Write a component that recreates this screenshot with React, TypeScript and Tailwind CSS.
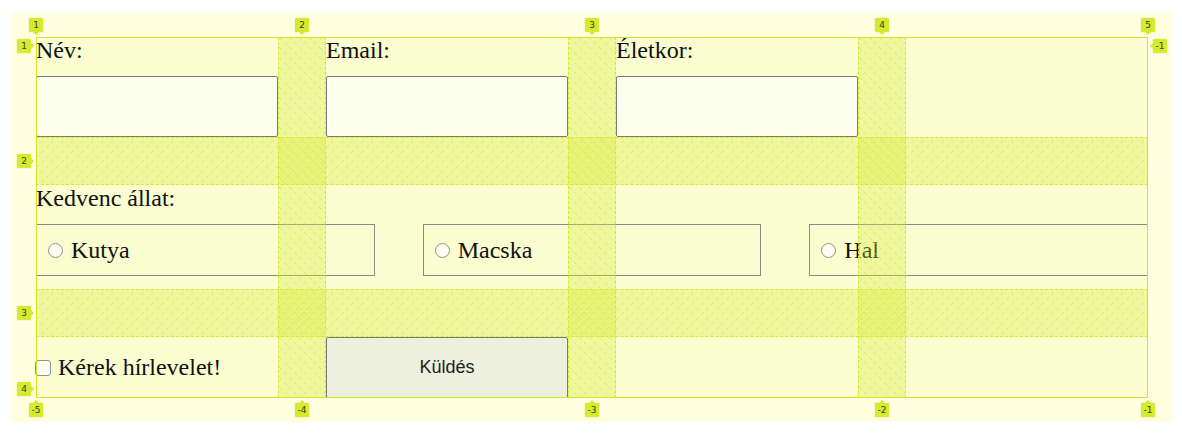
import React from "react";

function Hatch({ id, dir }: { id: string; dir: "back" | "fwd" }) {
  return (
    <svg className="absolute inset-0 h-full w-full" aria-hidden="true">
      <defs>
        <pattern id={id} width="10" height="10" patternUnits="userSpaceOnUse">
          {dir === "back" ? (
            <line x1="0" y1="0" x2="10" y2="10" stroke="rgba(205,230,40,0.6)" strokeWidth="1" strokeDasharray="4 3" />
          ) : (
            <line x1="0" y1="10" x2="10" y2="0" stroke="rgba(205,230,40,0.6)" strokeWidth="1" strokeDasharray="4 3" />
          )}
        </pattern>
      </defs>
      <rect width="100%" height="100%" fill={`url(#${id})`} />
    </svg>
  );
}

type Arrow = "down" | "up" | "right" | "left";

function Badge({ label, pos, arrow }: { label: string; pos: string; arrow: Arrow }) {
  return (
    <div
      className={`absolute ${pos} flex h-4 w-4 items-center justify-center rounded-[2px] border border-[#f4f9cf] bg-[#d5ea2e] font-['DejaVu_Sans',sans-serif] text-[9px] leading-none text-[#3d4010]`}
    >
      {label}
      {arrow === "down" && (
        <span className="absolute left-1/2 top-full -translate-x-1/2 border-x-[3px] border-t-[3px] border-x-transparent border-t-[#d5ea2e]" />
      )}
      {arrow === "up" && (
        <span className="absolute bottom-full left-1/2 -translate-x-1/2 border-x-[3px] border-b-[3px] border-x-transparent border-b-[#d5ea2e]" />
      )}
      {arrow === "right" && (
        <span className="absolute left-full top-1/2 -translate-y-1/2 border-y-[3px] border-l-[3px] border-y-transparent border-l-[#d5ea2e]" />
      )}
      {arrow === "left" && (
        <span className="absolute right-full top-1/2 -translate-y-1/2 border-y-[3px] border-r-[3px] border-y-transparent border-r-[#d5ea2e]" />
      )}
    </div>
  );
}

function Radio({ label }: { label: string }) {
  return (
    <label className="flex h-[52px] items-center border border-[#8c8c84] pl-[11px]">
      <span className="h-[15px] w-[15px] rounded-full border-[1.5px] border-[#939393] bg-[#fbfdf0]" />
      <span className="ml-2">{label}</span>
    </label>
  );
}

export default function App() {
  return (
    <div className="h-[436px] w-[1182px] overflow-hidden bg-white pl-[12px] pt-[13px]">
      <form className="w-[1160px] bg-[#ffffe0] p-6 font-['Liberation_Serif','Times_New_Roman',serif] text-[24px] leading-[normal] text-[#111]">
        <div className="relative grid grid-cols-[repeat(4,242px)] grid-rows-[100px_104px_61px] gap-12 bg-[#fafdd0]">
          {/* Row 1 */}
          <div className="flex flex-col justify-between">
            <span>Név:</span>
            <input type="text" className="h-[61px] w-full rounded-[2px] border border-[#7b7b7b] bg-[#fbfeec]" />
          </div>
          <div className="flex flex-col justify-between">
            <span>Email:</span>
            <input type="email" className="h-[61px] w-full rounded-[2px] border border-[#7b7b7b] bg-[#fbfeec]" />
          </div>
          <div className="flex flex-col justify-between">
            <span>Életkor:</span>
            <input type="text" className="h-[61px] w-full rounded-[2px] border border-[#7b7b7b] bg-[#fbfeec]" />
          </div>
          <div />

          {/* Row 2 */}
          <div className="col-span-4">
            <div className="h-[39px]">Kedvenc állat:</div>
            <div className="grid grid-cols-3 gap-12">
              <Radio label="Kutya" />
              <Radio label="Macska" />
              <Radio label="Hal" />
            </div>
          </div>

          {/* Row 3 */}
          <label className="flex items-center">
            <span className="-ml-px h-4 w-4 rounded-[3px] border-[1.5px] border-[#939393] bg-[#fdfef4]" />
            <span className="ml-[7px]">Kérek hírlevelet!</span>
          </label>
          <button
            type="button"
            className="rounded-[2px] border border-[#7a7a72] bg-[#edefdf] font-['Liberation_Sans',Arial,sans-serif] text-[18px] text-[#222]"
          >
            Küldés
          </button>

          {/* Grid overlay */}
          <div className="pointer-events-none absolute inset-0 grid grid-cols-[242px_48px_242px_48px_242px_48px_242px] grid-rows-[100px_48px_104px_48px_61px]">
            <div className="relative col-start-2 row-[1/-1] border-x border-dashed border-[#d3ea34] bg-[rgba(212,236,42,0.3)]">
              <Hatch id="c2" dir="back" />
            </div>
            <div className="relative col-start-4 row-[1/-1] border-x border-dashed border-[#d3ea34] bg-[rgba(212,236,42,0.3)]">
              <Hatch id="c4" dir="back" />
            </div>
            <div className="relative col-start-6 row-[1/-1] border-x border-dashed border-[#d3ea34] bg-[rgba(212,236,42,0.3)]">
              <Hatch id="c6" dir="back" />
            </div>
            <div className="relative col-[1/-1] row-start-2 border-y border-dashed border-[#d3ea34] bg-[rgba(212,236,42,0.3)]">
              <Hatch id="r2" dir="fwd" />
            </div>
            <div className="relative col-[1/-1] row-start-4 border-y border-dashed border-[#d3ea34] bg-[rgba(212,236,42,0.3)]">
              <Hatch id="r4" dir="fwd" />
            </div>
          </div>
          <div className="pointer-events-none absolute inset-0 border border-[#d0e625]" />

          {/* Line numbers */}
          <Badge label="1" pos="left-[-8px] top-[-20px]" arrow="down" />
          <Badge label="2" pos="left-[258px] top-[-20px]" arrow="down" />
          <Badge label="3" pos="left-[548px] top-[-20px]" arrow="down" />
          <Badge label="4" pos="left-[838px] top-[-20px]" arrow="down" />
          <Badge label="5" pos="left-[1104px] top-[-20px]" arrow="down" />

          <Badge label="-5" pos="left-[-8px] top-[365px]" arrow="up" />
          <Badge label="-4" pos="left-[258px] top-[365px]" arrow="up" />
          <Badge label="-3" pos="left-[548px] top-[365px]" arrow="up" />
          <Badge label="-2" pos="left-[838px] top-[365px]" arrow="up" />
          <Badge label="-1" pos="left-[1104px] top-[365px]" arrow="up" />

          <Badge label="1" pos="left-[-20px] top-[1px]" arrow="right" />
          <Badge label="2" pos="left-[-20px] top-[116px]" arrow="right" />
          <Badge label="3" pos="left-[-20px] top-[268px]" arrow="right" />
          <Badge label="4" pos="left-[-20px] top-[344px]" arrow="right" />
          <Badge label="-1" pos="left-[1116px] top-[1px]" arrow="left" />
        </div>
      </form>
    </div>
  );
}
